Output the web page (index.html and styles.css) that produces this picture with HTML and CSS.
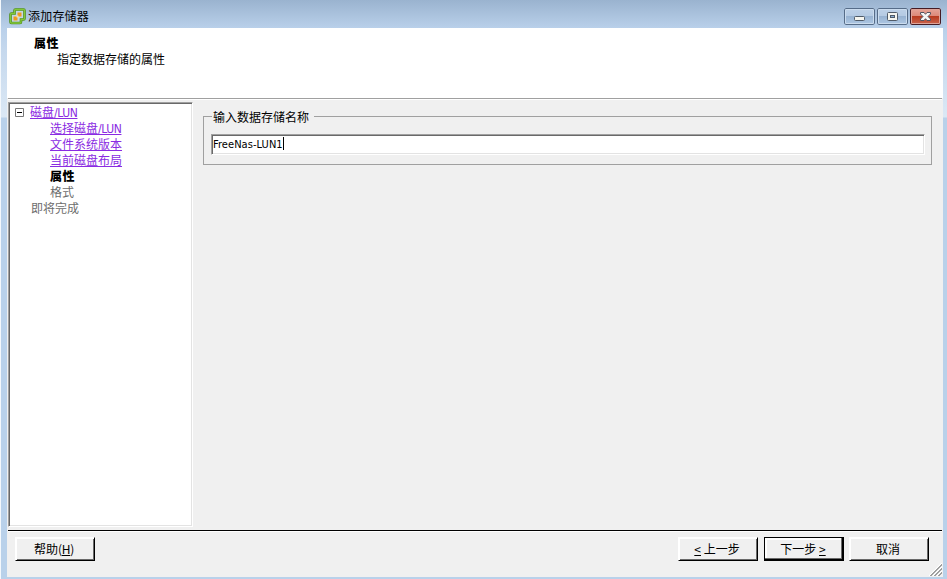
FILE: index.html
```html
<!DOCTYPE html>
<html lang="zh-CN">

<head>
    <meta charset="UTF-8">
    <meta name="viewport" content="width=device-width, initial-scale=1.0">
    <title>添加存储器</title>
    <link rel="stylesheet" href="styles.css">
</head>

<body>
    <div class="window">
        <div class="titlebar">
            <svg class="logo" width="17" height="17" viewBox="0 0 17 17">
                <path d="M6.500 1.500h8q1 0 1 1v8q0 1-1 1H12v2.500q0 1-1 1H2.500q-1 0-1-1V6.500q0-1 1-1h3v-3q0-1 1-1z" fill="#c3d6e6" stroke="#4c8a1c" stroke-width="2.600" />
                <path d="M6.500 1.500h8q1 0 1 1v8q0 1-1 1H12v2.500q0 1-1 1H2.500q-1 0-1-1V6.500q0-1 1-1h3v-3q0-1 1-1z" fill="none" stroke="#83c83a" stroke-width="1.300" />
                <path d="M8.500 4.500h4v4h-4zM4.500 8.500h4v4h-4z" fill="#f09a1d" />
                <path d="M7.500 7.500h2v2h-2z" fill="#fbe0a8" />
            </svg>
            <span class="caption">添加存储器</span>
            <div class="win-btns">
                <button class="win-btn">
                    <svg width="31" height="17" viewBox="0 0 31 17"><rect x="10.500" y="8.500" width="10" height="4" rx="1" fill="#f5f5ef" stroke="#505b68" /></svg>
                </button>
                <button class="win-btn">
                    <svg width="31" height="17" viewBox="0 0 31 17"><rect x="10.500" y="4.500" width="10" height="8" rx="1" fill="#f5f5ef" stroke="#505b68" /><rect x="13.500" y="7.500" width="4" height="2" fill="#8fb0d5" stroke="#505b68" /></svg>
                </button>
                <button class="win-btn close">
                    <svg width="31" height="17" viewBox="0 0 31 17"><path d="M10.500 4.500h3.500l1.500 1.800L17 4.500h3.500v1.500L18 8.500l2.500 2.500v1.500H17l-1.500-1.800L14 12.500h-3.500V11L13 8.500 10.500 6z" fill="#f5f5f5" stroke="#54535f" /></svg>
                </button>
            </div>
        </div>

        <div class="client">
            <div class="header">
                <h3 class="title">属性</h3>
                <p class="sub-title">指定数据存储的属性</p>
            </div>

            <div class="main">
                <div class="tree">
                    <div class="node root">
                        <svg class="toggle" width="9" height="9" viewBox="0 0 9 9"><path d="M.5.5h8v8h-8z" fill="#fff" stroke="#777" /><path d="M2 4.500h5" stroke="#000" /></svg>
                        <a class="link">磁盘<span class="caps">/LUN</span></a>
                    </div>
                    <div class="node sub"><a class="link">选择磁盘<span class="caps">/LUN</span></a></div>
                    <div class="node sub"><a class="link">文件系统版本</a></div>
                    <div class="node sub"><a class="link">当前磁盘布局</a></div>
                    <div class="node sub current">属性</div>
                    <div class="node sub todo">格式</div>
                    <div class="node last todo">即将完成</div>
                </div>
                <div class="content">
                    <fieldset class="group">
                        <legend>输入数据存储名称</legend>
                        <div class="input"><span class="value">FreeNas-LUN1</span><span class="caret"></span></div>
                    </fieldset>
                </div>
            </div>

            <div class="footer">
                <button class="btn help"><span>帮助<span class="key">(<u>H</u>)</span></span></button>
                <button class="btn prev"><span><u>&lt;</u> 上一步</span></button>
                <button class="btn next"><span>下一步 <u>&gt;</u></span></button>
                <button class="btn cancel"><span>取消</span></button>
                <svg class="grip" width="13" height="13" viewBox="0 0 13 13">
                    <path d="M0 13L13 0M4 13l9-9M8 13l5-5" stroke="#fff" stroke-width="1.200" />
                    <path d="M1 13L13 1M2 13L13 2M5 13l8-8M6 13l7-7M9 13l4-4M10 13l3-3" stroke="#8a8a8a" stroke-width=".8" />
                </svg>
            </div>
        </div>
    </div>
</body>

</html>
```
FILE: styles.css
```css
body,
h3,
p {
    margin: 0;
    padding: 0;
}

body {
    font-family: "Noto Sans CJK SC", sans-serif;
    font-size: 12px;
    line-height: 16px;
    color: #000;
    overflow: hidden;
}

button {
    padding: 0;
    border: none;
    outline: none;
    font: inherit;
    color: #000;
}

.window {
    box-sizing: border-box;
    display: flex;
    flex-direction: column;
    width: 947px;
    height: 579px;
    padding: 0 4px 2px 7px;
    background-image: linear-gradient(to right, #f4f8fc 1px, transparent 1px), linear-gradient(to bottom, #9ab3cf 0, #b9d0ea 28px, #c5d8ed 50px, #dbe8f5 117px, #b9d1ea 118px, #b9d1ea 100%);
}

.titlebar {
    display: flex;
    flex: none;
    height: 28px;
    padding: 0 2px;
}

.titlebar .logo {
    margin-top: 8px;
}

.titlebar .caption {
    margin: 8px 0 0 2px;
    letter-spacing: 0.200px;
}

.win-btns {
    display: flex;
    gap: 2px;
    margin: 8px 0 0 auto;
}

.win-btn {
    box-sizing: border-box;
    width: 31px;
    height: 17px;
    border-radius: 2px;
    box-shadow: inset 0 0 0 1px #566c88, inset 0 0 0 2px #cbdcee;
    background-image: linear-gradient(to bottom, #bfd2e8 0, #b4cae3 48%, #98b3d2 50%, #b0c9e5 100%);
}

.win-btn svg {
    display: block;
}

.win-btn.close {
    box-shadow: inset 0 0 0 1px #451b24, inset 0 0 0 2px #dea398;
    background-image: linear-gradient(to bottom, #e7a79c 0, #dc8878 48%, #b83b20 50%, #cb6852 100%);
}

.client {
    display: flex;
    flex: 1;
    flex-direction: column;
    min-height: 0;
    background-color: #f0f0f0;
}

.header {
    box-sizing: border-box;
    height: 70px;
    padding: 7px 0 0 27px;
    background-color: #fff;
}

.header .title {
    font-size: 12px;
    font-weight: 900;
    letter-spacing: 0.500px;
}

.header .sub-title {
    padding-left: 23px;
}

.main {
    display: flex;
    box-sizing: border-box;
    height: 432px;
    margin: 0 1px;
    padding: 3px 0;
    border-top: 1px solid #a0a0a0;
    box-shadow: inset 0 1px #fff;
}

.tree {
    box-sizing: border-box;
    width: 185px;
    height: 425px;
    padding-top: 1px;
    border: 1px solid;
    border-color: #a0a0a0 #fff #fff #a0a0a0;
    box-shadow: inset 1px 1px #696969, inset -1px -1px #e3e3e3;
    background-color: #fff;
}

.tree .node {
    height: 16px;
}

.tree .root {
    display: flex;
    padding-left: 6px;
}

.tree .toggle {
    margin: 4px 6px 0 0;
}

.tree .sub {
    padding-left: 41px;
}

.tree .last {
    padding-left: 22px;
}

.link {
    color: #8a2be2;
    text-decoration: underline;
    text-underline-offset: 1px;
}

.link .caps {
    font-family: "DejaVu Sans Condensed", "DejaVu Sans", sans-serif;
    font-size: 12px;
    letter-spacing: -0.400px;
}

.tree .current {
    font-weight: 900;
    letter-spacing: 0.500px;
}

.todo {
    color: #6d6d6d;
}

.content {
    flex: 1;
    padding: 5px 10px 0;
}

.group {
    box-sizing: border-box;
    height: 58px;
    margin: 0;
    padding: 9px 6px 0 7px;
    border: 1px solid #a0a0a0;
}

.group legend {
    margin-left: 1px;
    padding: 2px 5px 0 1px;
}

.input {
    display: flex;
    box-sizing: border-box;
    height: 21px;
    padding: 1px;
    border: 1px solid;
    border-color: #a0a0a0 #fff #fff #a0a0a0;
    box-shadow: inset 1px 1px #696969, inset -1px -1px #e3e3e3;
    background-color: #fff;
}

.input .value {
    font-family: "DejaVu Sans Condensed", "DejaVu Sans", sans-serif;
    font-size: 11px;
    line-height: 17px;
    letter-spacing: 0.060px;
}

.input .caret {
    width: 1px;
    height: 13px;
    margin-top: 1px;
    background-color: #000;
}

.footer {
    display: flex;
    flex: 1;
    margin: 0 1px;
    padding: 6px 0 0 7px;
    border-top: 1px solid #000;
    box-shadow: inset 0 1px #fff;
}

.btn {
    box-sizing: border-box;
    flex: none;
    width: 80px;
    height: 24px;
    padding-right: 2px;
    border: 1px solid;
    border-color: #fff #000 #000 #fff;
    box-shadow: inset 1px 1px #fff, inset -1px -1px #696969;
    background-color: #f0f0f0;
}

.btn u {
    text-underline-offset: 1px;
}

.btn .key {
    font-size: 12px;
    letter-spacing: -0.300px;
}

.help {
    margin-right: auto;
}

.prev {
    margin-right: 6px;
}

.next {
    margin-right: 5px;
    border-color: #000;
    box-shadow: inset -1px -1px #000, inset -2px -2px #696969, inset 2px 2px #fff;
}

.grip {
    align-self: flex-end;
    margin: 0 0 1px;
}
```
